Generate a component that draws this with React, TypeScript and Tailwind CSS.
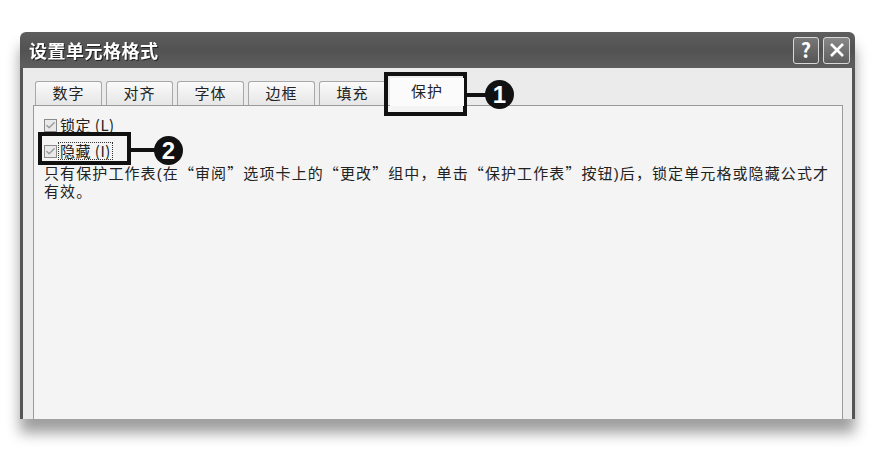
import { Check } from 'lucide-react';

const tabs = ['数字', '对齐', '字体', '边框', '填充'];

const cjk = { fontFamily: '"Noto Sans CJK SC", "Liberation Sans", sans-serif' };
const latinFirst = { fontFamily: '"Liberation Sans", "Noto Sans CJK SC", sans-serif' };

// full-width quote marks come from the CJK font
function Q({ children }: { children: string }) {
  return <span style={cjk}>{children}</span>;
}

function Checkbox({ label, focused }: { label: string; focused?: boolean }) {
  return (
    <div className="flex items-center gap-[2px] h-[22px]">
      <span className="flex items-center justify-center w-[13px] h-[13px] border border-[#8a8a8a] bg-[#e9e9e9]">
        <Check className="w-[11px] h-[11px] text-[#9a9a9a]" strokeWidth={3} />
      </span>
      <span
        className={`text-[15px] leading-[16px] tracking-[0.5px] text-[#222] px-[1px] ${focused ? 'outline-1 outline-dotted outline-[#333]' : ''}`}
      >
        {label}
      </span>
    </div>
  );
}

export default function App() {
  return (
    <div className="w-[885px] h-[457px] bg-white relative overflow-hidden" style={cjk}>
      {/* Dialog window */}
      <div className="absolute left-[20px] top-[32px] w-[835px] h-[387px] flex flex-col rounded-t-[6px] shadow-[0_14px_14px_rgba(0,0,0,0.38)]">
        {/* Title bar */}
        <div className="h-[36px] flex items-center justify-between rounded-t-[6px] bg-gradient-to-b from-[#5e5e5e] via-[#525252] to-[#5e5e5e] pl-[9px] pr-[5px]">
          <span className="text-white font-bold text-[18px] tracking-[0.5px] drop-shadow-[1px_1px_0_rgba(0,0,0,0.6)]">
            设置单元格格式
          </span>
          <div className="flex gap-[4px]">
            <div className="w-[26px] h-[27px] rounded-[3px] border border-[#d8d8d8] bg-gradient-to-b from-[#777] to-[#555] flex items-center justify-center text-white text-[20px] font-bold leading-none">
              ?
            </div>
            <div className="w-[27px] h-[27px] rounded-[3px] border border-[#d8d8d8] bg-gradient-to-b from-[#888] to-[#5f5f5f] flex items-center justify-center">
              <svg width="18" height="18" viewBox="0 0 18 18">
                <path d="M3 3 L15 15 M15 3 L3 15" stroke="white" strokeWidth="2.6" />
              </svg>
            </div>
          </div>
        </div>

        {/* Body */}
        <div className="flex-1 flex flex-col bg-[#ebebeb] border-l-[3px] border-r-[3px] border-[#555] pl-[10px] pr-[9px] pt-[12px]">
          {/* Tabs */}
          <div className="flex items-end pl-[2px] gap-[4px] h-[25px]">
            {tabs.map((t) => (
              <div
                key={t}
                className="w-[67px] h-[24px] flex items-center justify-center text-[15px] tracking-[1px] text-[#222] border border-b-0 border-[#a8a8a8] rounded-t-[3px] bg-gradient-to-b from-[#fafafa] to-[#e6e6e6]"
              >
                {t}
              </div>
            ))}
            <div className="w-[74px] h-[28px] -mb-[1px] flex items-start pt-[2px] justify-center text-[15px] tracking-[1px] text-[#222] bg-[#fbfbfb] relative z-10">
              保护
            </div>
          </div>

          {/* Panel */}
          <div className="flex-1 bg-[#f4f4f4] border border-[#9a9a9a] border-b-0 pl-[10px] pt-[8px]">
            <Checkbox label="锁定 (L)" />
            <div className="mt-[4px]">
              <Checkbox label="隐藏 (I)" focused />
            </div>
            <p
              className="text-[15px] leading-[17.5px] tracking-[1.1px] text-[#222] mt-[2px] whitespace-nowrap"
              style={latinFirst}
            >
              只有保护工作表(在<Q>“</Q>审阅<Q>”</Q>选项卡上的<Q>“</Q>更改<Q>”</Q>组中，单击<Q>“</Q>保护工作表<Q>”</Q>按钮)后，锁定单元格或隐藏公式才
              <br />
              有效。
            </p>
          </div>
        </div>
      </div>

      {/* Callout 1 */}
      <div className="absolute left-[384px] top-[72px] w-[83px] h-[44px] border-[4px] border-[#111]" />
      <div className="absolute left-[467px] top-[93px] w-[20px] h-[4px] bg-[#111]" />
      <div className="absolute left-[485px] top-[80px] w-[29px] h-[29px] rounded-full bg-[#111] text-white font-bold text-[24px] flex items-center justify-center" style={{ fontFamily: '"Liberation Sans", sans-serif' }}>
        1
      </div>

      {/* Callout 2 */}
      <div className="absolute left-[38px] top-[132px] w-[93px] h-[33px] border-[4px] border-[#111]" />
      <div className="absolute left-[131px] top-[148px] w-[25px] h-[4px] bg-[#111]" />
      <div className="absolute left-[154px] top-[136px] w-[29px] h-[29px] rounded-full bg-[#111] text-white font-bold text-[24px] flex items-center justify-center" style={{ fontFamily: '"Liberation Sans", sans-serif' }}>
        2
      </div>
    </div>
  );
}
